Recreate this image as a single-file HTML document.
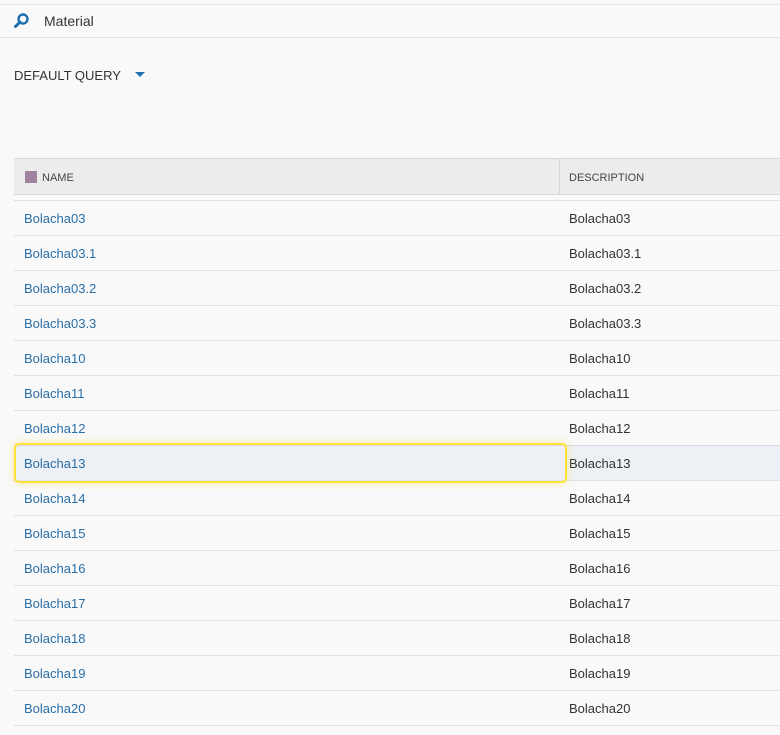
<!DOCTYPE html><html><head><style>
body{margin:0;width:780px;height:735px;background:#f9f9f9;font-family:"Liberation Sans",sans-serif;position:relative;overflow:hidden}
.t{position:absolute;white-space:nowrap}
.line{position:absolute;height:1px;background:#e1e1e1}
.r{position:absolute;left:14px;width:766px;height:34px;border-bottom:1px solid #e1e1e1;font-size:13px}
.r span{position:absolute;top:10px}
.a{left:10px;color:#2a6ea6}.b{left:555px;color:#333}
</style></head><body>
<div class="line" style="top:4px;left:0;width:780px;background:#e6e6e6"></div>
<div class="line" style="top:37px;left:0;width:780px"></div>
<svg class="t" style="left:13px;top:12px" width="18" height="18" viewBox="0 0 18 18"><circle cx="10" cy="7" r="4.5" fill="none" stroke="#1c6fb0" stroke-width="2.4"/><path d="M7 10 L2.5 14.5" stroke="#1c6fb0" stroke-width="3" stroke-linecap="round"/></svg>
<div class="t" style="left:44px;top:13px;font-size:14px;color:#333">Material</div>
<div class="t" style="left:14px;top:68px;font-size:13px;color:#333">DEFAULT QUERY</div>
<div class="t" style="left:135px;top:72px;width:0;height:0;border-left:5px solid transparent;border-right:5px solid transparent;border-top:5px solid #1c6fb0"></div>
<div style="position:absolute;left:14px;top:158px;width:766px;height:35px;background:#ececec;border-top:1px solid #d9d9d9;border-bottom:1px solid #d9d9d9"></div>
<div style="position:absolute;left:559px;top:159px;width:1px;height:35px;background:#d6d6d6"></div>
<div class="t" style="left:25px;top:171px;width:12px;height:12px;background:#a083a0"></div>
<div class="t" style="left:42px;top:172px;font-size:11px;color:#444">NAME</div>
<div class="t" style="left:569px;top:172px;font-size:11px;color:#444">DESCRIPTION</div>
<div class="line" style="top:200px;left:14px;width:766px"></div>
<div class="r" style="top:201px"><span class="a">Bolacha03</span><span class="b">Bolacha03</span></div>
<div class="r" style="top:236px"><span class="a">Bolacha03.1</span><span class="b">Bolacha03.1</span></div>
<div class="r" style="top:271px"><span class="a">Bolacha03.2</span><span class="b">Bolacha03.2</span></div>
<div class="r" style="top:306px"><span class="a">Bolacha03.3</span><span class="b">Bolacha03.3</span></div>
<div class="r" style="top:341px"><span class="a">Bolacha10</span><span class="b">Bolacha10</span></div>
<div class="r" style="top:376px"><span class="a">Bolacha11</span><span class="b">Bolacha11</span></div>
<div class="r" style="top:411px"><span class="a">Bolacha12</span><span class="b">Bolacha12</span></div>
<div class="r" style="top:445px;background:#edf1f5;border-top:1px solid #d6d9de"><span class="a">Bolacha13</span><span class="b">Bolacha13</span></div>
<div style="position:absolute;left:14px;top:443px;width:549px;height:36px;border:2px solid #fde23a;border-radius:5px;box-shadow:0 0 8px rgba(253,226,58,.5)"></div>
<div class="r" style="top:481px"><span class="a">Bolacha14</span><span class="b">Bolacha14</span></div>
<div class="r" style="top:516px"><span class="a">Bolacha15</span><span class="b">Bolacha15</span></div>
<div class="r" style="top:551px"><span class="a">Bolacha16</span><span class="b">Bolacha16</span></div>
<div class="r" style="top:586px"><span class="a">Bolacha17</span><span class="b">Bolacha17</span></div>
<div class="r" style="top:621px"><span class="a">Bolacha18</span><span class="b">Bolacha18</span></div>
<div class="r" style="top:656px"><span class="a">Bolacha19</span><span class="b">Bolacha19</span></div>
<div class="r" style="top:691px"><span class="a">Bolacha20</span><span class="b">Bolacha20</span></div>
</body></html>
